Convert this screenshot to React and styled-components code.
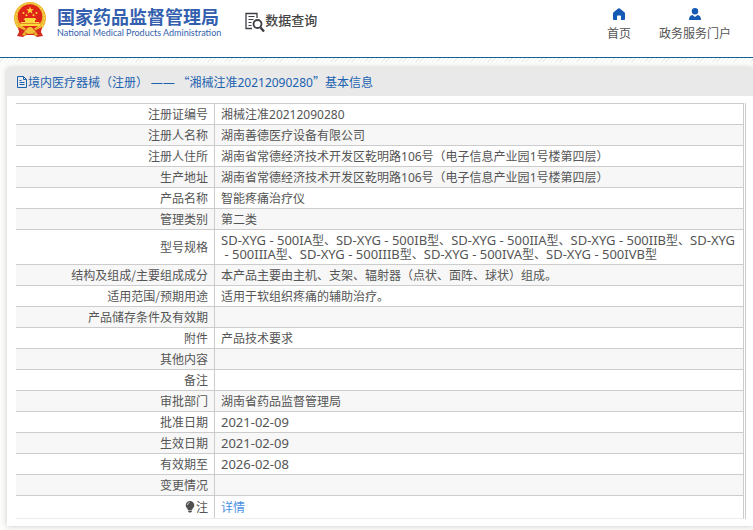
import React, { Fragment } from 'react';
import styled, { createGlobalStyle } from 'styled-components';

const CJK = '"Noto Sans CJK SC", sans-serif';

const GlobalStyle = createGlobalStyle`
  * { box-sizing: border-box; }
  body {
    margin: 0;
    background: #fcfcfb;
    color: #555;
    font-family: ${CJK};
    font-size: 12px;
    line-height: 14px;
  }
  a { text-decoration: none; }
`;

const Page = styled.div`
  overflow: hidden;
`;

const Header = styled.header`
  display: flex;
  align-items: flex-start;
  height: 58px;
  padding: 0 22px 0 13px;
  background: #fff;
  border-bottom: 1px solid #16609a;
`;

const Brand = styled.a`
  display: flex;
  gap: 10px;
  padding-top: 1px;
  color: #345fae;
`;

const BrandText = styled.div`
  display: flex;
  flex-direction: column;
  padding-top: 5px;
`;

const BrandName = styled.strong`
  font-size: 18px;
  line-height: 20px;
  font-weight: 700;
  white-space: nowrap;
`;

const BrandSub = styled.span`
  font: 400 9px/14px Lato, Arial, sans-serif;
  white-space: nowrap;
`;

const Query = styled.a`
  display: flex;
  align-items: flex-start;
  margin-left: 24px;
  padding-top: 11px;
  color: #444;
  font-size: 13px;
  font-weight: 500;
  line-height: 18px;
  white-space: nowrap;
`;

const Nav = styled.nav`
  display: flex;
  gap: 28px;
  margin-left: auto;
  padding-top: 8px;
`;

const NavLink = styled.a`
  display: flex;
  flex-direction: column;
  align-items: center;
  gap: 5px;
  color: #555;
  line-height: 16px;
  white-space: nowrap;
`;

const Hatch = styled.div`
  height: 4px;
  background: repeating-linear-gradient(135deg, #fff 0 2px, #e9efe6 2px 3px);
`;

const Panel = styled.main`
  margin: 6px 0 4px 7px;
  padding-bottom: 7px;
  background: #fff;
  box-shadow: 0 0 6px rgba(0, 0, 0, 0.2);
`;

const PanelTitle = styled.h1`
  display: flex;
  align-items: center;
  height: 28px;
  margin: 0 0 7px;
  padding-left: 10px;
  background: #e9e9e9;
  color: #1b62b0;
  font-size: 12px;
  font-weight: 400;
  white-space: pre;
`;

const TableFrame = styled.div`
  margin: 0 7px 0 9px;
  border-right: 1px solid #ccc;
  padding-right: 1px;
`;

const Table = styled.table`
  width: 100%;
  border-collapse: separate;
  border-spacing: 0;
  border-right: 1px solid #ccc;
  border-bottom: 1px solid #ececec;
`;

const Row = styled.tr`
  height: ${(p) => (p.$tall ? 23 : 21)}px;
  background: ${(p) => (p.$shaded ? '#f7f7f7' : '#fff')};
`;

const Label = styled.th`
  width: 199px;
  padding: 3px 6px;
  border-top: 1px solid #ccc;
  border-right: 1px solid #ccc;
  font-weight: 400;
  text-align: right;
  white-space: nowrap;
`;

const Value = styled.td`
  padding: 3px 4px 3px 6px;
  border-top: 1px solid #ccc;
`;

const Latin = styled.span`
  font-family: "Noto Sans", sans-serif;
  font-size: ${(p) => (p.$large ? 13 : 12)}px;
  line-height: 8px;
  white-space: pre;
`;

const DetailLink = styled.a`
  color: #4a90e2;
`;

const Bulb = styled.svg`
  vertical-align: -1px;
  margin-right: 1px;
`;

function Mixed({ text, large }) {
  return text.split(/(—+|(?: - )?[A-Z0-9][A-Z0-9-]*)/).map((part, i) => {
    if (/^(—| - |[A-Z0-9])/.test(part)) {
      return (
        <Fragment key={i}>
          {part.startsWith(' - ') && <wbr />}
          <Latin $large={large}>{part}</Latin>
        </Fragment>
      );
    }
    return part;
  });
}

function Emblem() {
  return (
    <svg width="34" height="37" viewBox="0 0 34 37" aria-hidden="true">
      <path d="M7 29 4 35l6 1 3-2h8l3 2 6-1-3-6z" fill="#d52b1e" />
      <circle cx="17" cy="17" r="16" fill="#edb62d" />
      <circle cx="17" cy="17" r="14.3" fill="none" stroke="#f9d85a" strokeWidth="1.2" strokeDasharray="2 1.4" />
      <circle cx="17" cy="15.5" r="12.2" fill="#de2418" />
      <path d="m17 5.500 1 2.700h2.900l-2.300 1.700.9 2.800-2.500-1.700-2.500 1.700.9-2.800-2.300-1.700H16z" fill="#ffd83b" />
      <g fill="#ffd83b">
        <circle cx="10.500" cy="12" r="1" />
        <circle cx="23.500" cy="12" r="1" />
        <circle cx="13.500" cy="14.300" r="1" />
        <circle cx="20.500" cy="14.300" r="1" />
        <path d="M12 17h10l1.500 2H22v2h4l1 2v2H7v-2l1-2h4v-2h-1.500z" />
      </g>
      <path d="M7 22.500h20" stroke="#e9852a" strokeWidth="1" />
      <path d="M5 26c3 1 5 3 7 3l1-2h8l1 2c2 0 4-2 7-3l-1 5c-3 1-6 1-8 0l-3-2-3 2c-2 1-5 1-8 0z" fill="#d52b1e" />
      <path d="M13 29c1-2 2-3 4-3s3 1 4 3l2 1-3 2h-6l-3-2z" fill="#f3c23a" />
      <path d="m9 34 3-4 1 5zm16 0-3-4-1 5z" fill="#edb62d" />
    </svg>
  );
}

function QueryIcon() {
  return (
    <svg width="20" height="21" viewBox="0 0 20 21" fill="none" stroke="#3e3e46" aria-hidden="true">
      <path d="M12 7V2.500H1v15h6" strokeWidth="1.300" />
      <path d="M3.500 5.500h6M3.500 8.500h5M3.500 11.500h3M3.500 14.500h3" strokeWidth="1.100" />
      <circle cx="12.500" cy="13" r="4" strokeWidth="1.800" />
      <path d="m15.500 16.500 3.500 4" strokeWidth="2.400" />
    </svg>
  );
}

function HomeIcon() {
  return (
    <svg width="14" height="12" viewBox="0 0 14 12" aria-hidden="true">
      <path d="M6.200.6 1.600 4.300C1.200 4.700 1 5.100 1 5.600v5.400c0 .6.3 1 .9 1H5V8.300c0-.5.3-.8.8-.8h2.400c.5 0 .8.3.8.8V12h3.100c.6 0 .9-.4.9-1V5.600c0-.5-.2-.9-.6-1.300L7.800.6a1.300 1.300 0 0 0-1.600 0z" fill="#1459b3" />
    </svg>
  );
}

function UserIcon() {
  return (
    <svg width="12" height="12" viewBox="0 0 12 12" aria-hidden="true">
      <circle cx="6" cy="3.200" r="3.200" fill="#1459b3" />
      <path d="M0 12c0-3 1.200-4.600 3.500-5L6 9l2.500-2C10.800 7.400 12 9 12 12z" fill="#1459b3" />
    </svg>
  );
}

function DocIcon() {
  return (
    <svg width="11" height="12" viewBox="0 0 11 12" fill="none" stroke="#1b62b0" aria-hidden="true">
      <path d="M.5.500h6l3 3v8h-9zM6.500.500v3h3M2.500 4.500h2M2.500 6.500h5M2.500 8.500h5" />
    </svg>
  );
}

function BulbIcon() {
  return (
    <Bulb width="10" height="12" viewBox="0 0 10 12" aria-hidden="true">
      <path d="M5 0a4.300 4.300 0 0 1 4.300 4.300C9.300 6.500 7.500 7.300 7 9H3C2.500 7.300.7 6.500.7 4.300A4.300 4.300 0 0 1 5 0z" fill="#505050" />
      <path d="M3.200 9.500h3.600v1L6 11.500H4l-.8-1z" fill="#505050" />
      <path d="M2.500 4c0-1.300.8-2.200 2-2.300" fill="none" stroke="#fff" strokeWidth=".8" />
    </Bulb>
  );
}

const rows = [
  ['注册证编号', '湘械注准20212090280'],
  ['注册人名称', '湖南善德医疗设备有限公司'],
  ['注册人住所', '湖南省常德经济技术开发区乾明路106号（电子信息产业园1号楼第四层）'],
  ['生产地址', '湖南省常德经济技术开发区乾明路106号（电子信息产业园1号楼第四层）'],
  ['产品名称', '智能疼痛治疗仪'],
  ['管理类别', '第二类'],
  ['型号规格', 'SD-XYG - 500IA型、SD-XYG - 500IB型、SD-XYG - 500IIA型、SD-XYG - 500IIB型、SD-XYG - 500IIIA型、SD-XYG - 500IIIB型、SD-XYG - 500IVA型、SD-XYG - 500IVB型', true],
  ['结构及组成/主要组成成分', '本产品主要由主机、支架、辐射器（点状、面阵、球状）组成。'],
  ['适用范围/预期用途', '适用于软组织疼痛的辅助治疗。'],
  ['产品储存条件及有效期', ''],
  ['附件', '产品技术要求'],
  ['其他内容', ''],
  ['备注', ''],
  ['审批部门', '湖南省药品监督管理局'],
  ['批准日期', '2021-02-09', true],
  ['生效日期', '2021-02-09', true],
  ['有效期至', '2026-02-08', true],
  ['变更情况', ''],
];

export default function App() {
  return (
    <Page>
      <GlobalStyle />
      <Header>
        <Brand href="#">
          <Emblem />
          <BrandText>
            <BrandName>国家药品监督管理局</BrandName>
            <BrandSub>National Medical Products Administration</BrandSub>
          </BrandText>
        </Brand>
        <Query href="#"><QueryIcon />数据查询</Query>
        <Nav>
          <NavLink href="#"><HomeIcon />首页</NavLink>
          <NavLink href="#"><UserIcon />政务服务门户</NavLink>
        </Nav>
      </Header>
      <Hatch />
      <Panel>
        <PanelTitle>
          <DocIcon />
          <span><Mixed text="境内医疗器械（注册） —— “湘械注准20212090280”基本信息" /></span>
        </PanelTitle>
        <TableFrame>
          <Table>
            <tbody>
              {rows.map(([label, value, large], i) => (
                <Row key={label} $shaded={i % 2 === 1}>
                  <Label scope="row">{label}</Label>
                  <Value><Mixed text={value} large={large} /></Value>
                </Row>
              ))}
              <Row $tall>
                <Label scope="row"><BulbIcon />注</Label>
                <Value><DetailLink href="#">详情</DetailLink></Value>
              </Row>
            </tbody>
          </Table>
        </TableFrame>
      </Panel>
    </Page>
  );
}
